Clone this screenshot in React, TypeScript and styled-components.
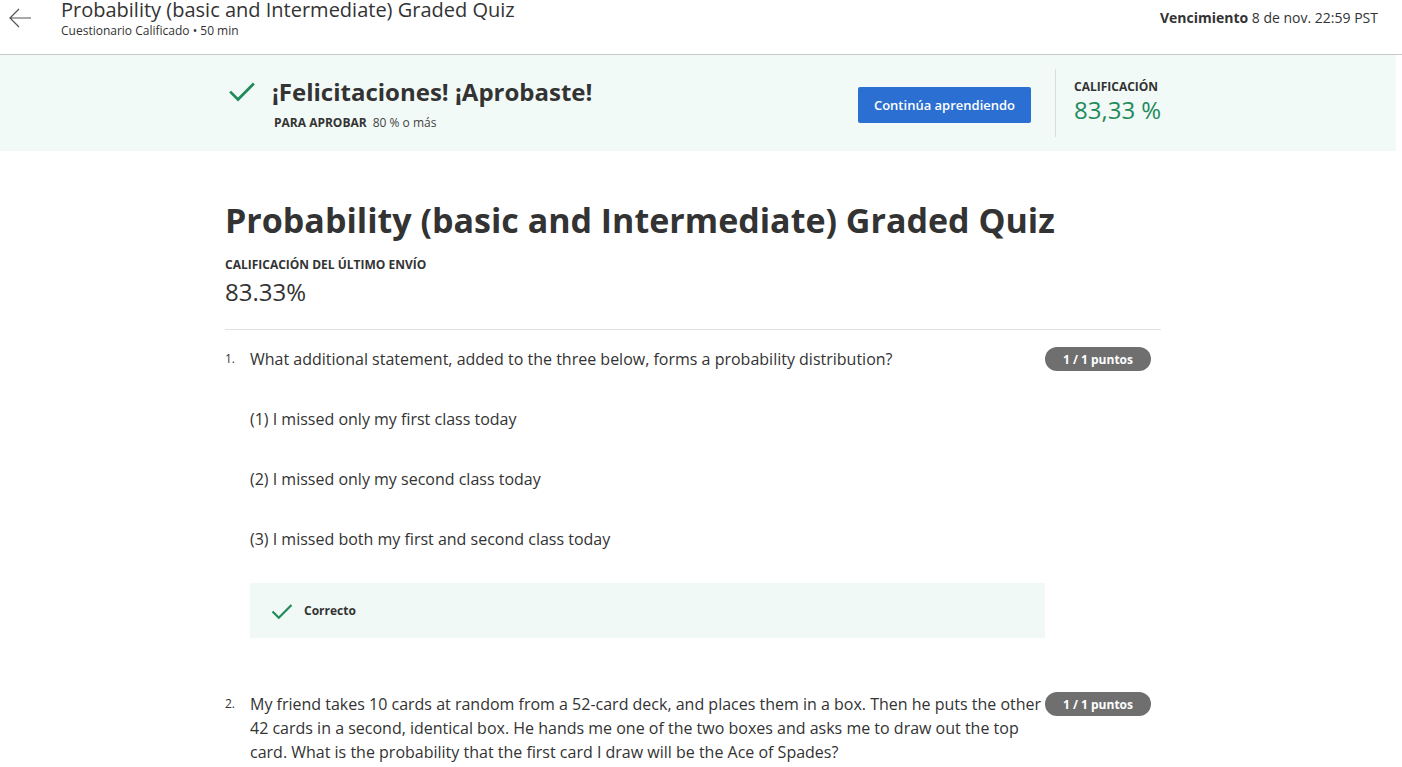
import React from "react";
import styled, { createGlobalStyle } from "styled-components";

const Global = createGlobalStyle`
  html, body { margin: 0; padding: 0; background: #fff; }
  body { font-family: "Open Sans", "Liberation Sans", sans-serif; color: #373a3c; overflow: hidden; }
  * { box-sizing: border-box; }
`;

const Header = styled.header`
  height: 55px;
  border-bottom: 1px solid #c8c8c8;
  display: flex;
  align-items: flex-start;
  padding: 0 24px 0 8px;
`;

const BackButton = styled.div`
  width: 24px;
  height: 24px;
  margin-top: 6px;
  margin-right: 29px;
  display: flex;
`;

const HeaderTitles = styled.div`
  flex: 1;
  display: flex;
  flex-direction: column;
  padding-top: 0;
`;

const HeaderTitle = styled.div`
  font-size: 20px;
  line-height: 20px;
  color: #333;
`;

const HeaderSub = styled.div`
  font-size: 12px;
  line-height: 16px;
  color: #333;
  margin-top: 3px;
`;

const Due = styled.div`
  font-size: 14px;
  line-height: 20px;
  color: #333;
  margin-top: 8px;
  b { font-weight: 700; }
`;

const Banner = styled.section`
  width: 1396px;
  height: 96px;
  background: #f2faf7;
  display: flex;
  align-items: center;
  padding-left: 227px;
`;

const BannerLeft = styled.div`
  display: flex;
  align-items: flex-start;
  width: 631px;
`;

const CheckWrap = styled.div<{ $size: number; $mt: number; $mr: number }>`
  width: ${(p) => p.$size}px;
  height: ${(p) => p.$size}px;
  margin-top: ${(p) => p.$mt}px;
  margin-right: ${(p) => p.$mr}px;
  flex-shrink: 0;
  display: flex;
`;

const BannerTexts = styled.div`
  display: flex;
  flex-direction: column;
`;

const BannerTitle = styled.div`
  font-size: 24px;
  line-height: 32px;
  font-weight: 700;
  color: #333;
`;

const PassLine = styled.div`
  font-size: 12px;
  line-height: 16px;
  margin-top: 7px;
  margin-left: 2px;
  color: #444;
  b { font-weight: 700; color: #333; margin-right: 6px; }
`;

const PrimaryButton = styled.button`
  width: 173px;
  height: 36px;
  background: #2a6fd1;
  color: #fff;
  border: none;
  border-radius: 2px;
  font-family: "Open Sans", "Liberation Sans", sans-serif;
  font-size: 13px;
  font-weight: 600;
  margin-top: 4px;
`;

const VDivider = styled.div`
  width: 1px;
  height: 68px;
  background: #dcdcdc;
  margin: 0 18px 0 24px;
`;

const Grade = styled.div`
  display: flex;
  flex-direction: column;
  margin-top: -4px;
`;

const GradeLabel = styled.div`
  font-size: 12px;
  line-height: 16px;
  font-weight: 700;
  color: #333;
`;

const GradeValue = styled.div`
  font-size: 24px;
  line-height: 26px;
  margin-top: 2px;
  color: #1f8a5a;
`;

const Main = styled.main`
  width: 936px;
  margin-left: 225px;
  padding-top: 46px;
`;

const H1 = styled.h1`
  margin: 0;
  font-size: 34px;
  line-height: 46px;
  font-weight: 700;
  color: #333;
`;

const Label = styled.div`
  margin-top: 14px;
  font-size: 12px;
  line-height: 16px;
  font-weight: 700;
  color: #333;
`;

const Score = styled.div`
  font-size: 24px;
  line-height: 32px;
  color: #333;
  margin-top: 3px;
`;

const Rule = styled.hr`
  border: none;
  border-top: 1px solid #e1e1e1;
  margin: 21px 0 0;
`;

const Question = styled.div<{ $mt: number }>`
  display: flex;
  align-items: flex-start;
  margin-top: ${(p) => p.$mt}px;
`;

const QNum = styled.div`
  width: 25px;
  font-size: 12px;
  line-height: 24px;
  color: #333;
  flex-shrink: 0;
`;

const QBody = styled.div`
  width: 795px;
  display: flex;
  flex-direction: column;
`;

const QText = styled.div`
  font-size: 16px;
  line-height: 24px;
  color: #333;
`;

const Option = styled.div`
  font-size: 16px;
  line-height: 24px;
  color: #333;
  margin-top: 36px;
`;

const Feedback = styled.div`
  margin-top: 32px;
  height: 55px;
  background: #f0f9f5;
  display: flex;
  align-items: center;
  padding-left: 20px;
`;

const FeedbackText = styled.div`
  font-size: 12px;
  font-weight: 700;
  color: #333;
`;

const Points = styled.div`
  width: 106px;
  height: 24px;
  border-radius: 12px;
  background: #6f6f6f;
  color: #fff;
  font-size: 12px;
  font-weight: 700;
  display: flex;
  align-items: center;
  justify-content: center;
  flex-shrink: 0;
`;

const Check = ({ size }: { size: number }) => (
  <svg width={size} height={size} viewBox="0 0 24 24" fill="none">
    <path d="M2.5 12.5 L8.8 18.8 L21.5 6" stroke="#1f8a5a" strokeWidth="2.2" strokeLinecap="butt" />
  </svg>
);

export default function App() {
  return (
    <>
      <Global />
      <Header>
        <BackButton>
          <svg width="24" height="24" viewBox="0 0 24 24" fill="none">
            <path d="M11 3 L2 12 L11 21 M2 12 L23 12" stroke="#555" strokeWidth="1.2" />
          </svg>
        </BackButton>
        <HeaderTitles>
          <HeaderTitle>Probability (basic and Intermediate) Graded Quiz</HeaderTitle>
          <HeaderSub>Cuestionario Calificado • 50 min</HeaderSub>
        </HeaderTitles>
        <Due>
          <b>Vencimiento</b> 8 de nov. 22:59 PST
        </Due>
      </Header>
      <Banner>
        <BannerLeft>
          <CheckWrap $size={30} $mt={0} $mr={15}>
            <Check size={30} />
          </CheckWrap>
          <BannerTexts>
            <BannerTitle>¡Felicitaciones! ¡Aprobaste!</BannerTitle>
            <PassLine>
              <b>PARA APROBAR</b>80 % o más
            </PassLine>
          </BannerTexts>
        </BannerLeft>
        <PrimaryButton>Continúa aprendiendo</PrimaryButton>
        <VDivider />
        <Grade>
          <GradeLabel>CALIFICACIÓN</GradeLabel>
          <GradeValue>83,33 %</GradeValue>
        </Grade>
      </Banner>
      <Main>
        <H1>Probability (basic and Intermediate) Graded Quiz</H1>
        <Label>CALIFICACIÓN DEL ÚLTIMO ENVÍO</Label>
        <Score>83.33%</Score>
        <Rule />
        <Question $mt={17}>
          <QNum>1.</QNum>
          <QBody>
            <QText>What additional statement, added to the three below, forms a probability distribution?</QText>
            <Option>(1) I missed only my first class today</Option>
            <Option>(2) I missed only my second class today</Option>
            <Option>(3) I missed both my first and second class today</Option>
            <Feedback>
              <CheckWrap $size={24} $mt={0} $mr={10}>
                <Check size={24} />
              </CheckWrap>
              <FeedbackText>Correcto</FeedbackText>
            </Feedback>
          </QBody>
          <Points>1 / 1 puntos</Points>
        </Question>
        <Question $mt={54}>
          <QNum>2.</QNum>
          <QBody>
            <QText>
              My friend takes 10 cards at random from a 52-card deck, and places them in a box. Then he puts the other 42 cards in a second, identical box. He hands me one of the two boxes and asks me to draw out the top card. What is the probability that the first card I draw will be the Ace of Spades?
            </QText>
          </QBody>
          <Points>1 / 1 puntos</Points>
        </Question>
      </Main>
    </>
  );
}
